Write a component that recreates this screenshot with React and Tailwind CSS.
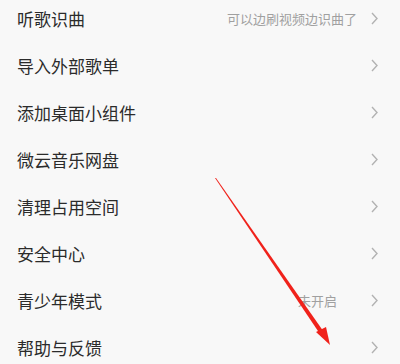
const rows = [
    { label: '听歌识曲', hint: '可以边刷视频边识曲了', hintGap: 'mr-[14px]' },
    { label: '导入外部歌单' },
    { label: '添加桌面小组件' },
    { label: '微云音乐网盘' },
    { label: '清理占用空间' },
    { label: '安全中心' },
    { label: '青少年模式', hint: '未开启', hintGap: 'mr-[34px]' },
    { label: '帮助与反馈' },
];

function Chevron() {
    return (
        <svg width="7" height="13" viewBox="0 0 7 13" className="shrink-0">
            <polyline points="1,1 6,6.5 1,12" fill="none" stroke="#b2b2b2" strokeWidth="1.4" />
        </svg>
    );
}

export default function App() {
    return (
        <div
            className="relative w-[400px] h-[364px] overflow-hidden bg-[#f8f8f8]"
            style={{ fontFamily: '"Noto Sans CJK SC", "Noto Sans", sans-serif' }}
        >
            <div className="-mt-[5px] flex flex-col">
                {rows.map((row) => (
                    <div key={row.label} className="h-[47px] flex items-center pl-[17px] pr-[22px]">
                        <span className="flex-1 text-[17px] text-[#2b2b2b]">{row.label}</span>
                        {row.hint && (
                            <span className={`text-[13px] text-[#a0a0a0] ${row.hintGap}`}>{row.hint}</span>
                        )}
                        <Chevron />
                    </div>
                ))}
            </div>

            {/* red annotation arrow */}
            <svg className="absolute left-0 top-0 pointer-events-none" width="400" height="364">
                <polygon points="215,178 216,178 326,335 322,337" fill="#f0221b" />
                <polygon points="316,332 330,345 326,327" fill="#f0221b" />
            </svg>
        </div>
    );
}
